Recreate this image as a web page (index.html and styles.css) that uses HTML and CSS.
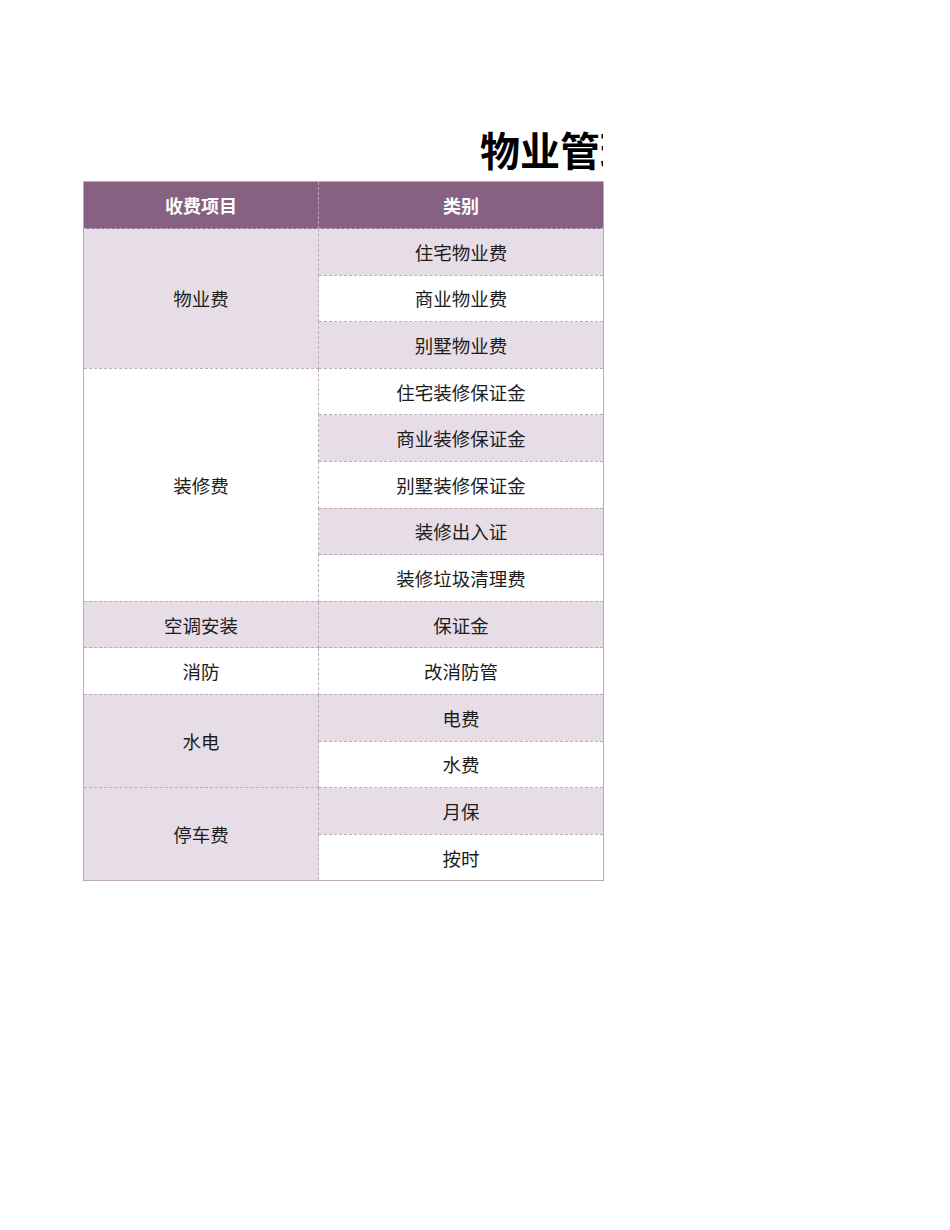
FILE: index.html
```html
<!DOCTYPE html>
<html lang="zh-CN">
<head>
<meta charset="utf-8">
<title>物业管理收费标准</title>
<link rel="stylesheet" href="styles.css">
</head>
<body>
<div class="sheet">
  <div class="title-clip"><h1 class="title">物业管理收费标准</h1></div>
  <table class="fee-table">
    <colgroup><col class="c1"><col class="c2"></colgroup>
    <thead>
      <tr><th>收费项目</th><th>类别</th></tr>
    </thead>
    <tbody>
      <tr><td rowspan="3" class="tint">物业费</td><td class="tint">住宅物业费</td></tr>
      <tr><td>商业物业费</td></tr>
      <tr><td class="tint">别墅物业费</td></tr>
      <tr><td rowspan="5">装修费</td><td>住宅装修保证金</td></tr>
      <tr><td class="tint">商业装修保证金</td></tr>
      <tr><td>别墅装修保证金</td></tr>
      <tr><td class="tint">装修出入证</td></tr>
      <tr><td>装修垃圾清理费</td></tr>
      <tr><td class="tint">空调安装</td><td class="tint">保证金</td></tr>
      <tr><td>消防</td><td>改消防管</td></tr>
      <tr><td rowspan="2" class="tint">水电</td><td class="tint">电费</td></tr>
      <tr><td>水费</td></tr>
      <tr><td rowspan="2" class="tint">停车费</td><td class="tint">月保</td></tr>
      <tr><td>按时</td></tr>
    </tbody>
  </table>
</div>
</body>
</html>
```

FILE: styles.css
```css
html, body {
  margin: 0;
  padding: 0;
  background: #ffffff;
}

body {
  font-family: "Noto Sans CJK SC", "Noto Sans", sans-serif;
  color: #1c1c1c;
}

.sheet {
  padding: 0 0 0 83px;
}

.title-clip {
  width: 520px;
  overflow: hidden;
  padding-top: 127px;
  height: 54px;
  box-sizing: content-box;
}

.title {
  margin: 0;
  padding-left: 397px;
  font-size: 40px;
  line-height: 44px;
  font-weight: 700;
  white-space: nowrap;
  color: #000000;
}

.fee-table {
  border-collapse: collapse;
  table-layout: fixed;
  width: 520px;
  border: 1px solid #bfa7be;
}

.c1 { width: 235px; }
.c2 { width: 285px; }

.fee-table th {
  background: #866182;
  color: #ffffff;
  font-size: 18px;
  font-weight: 700;
  height: 46px;
  padding: 0;
  text-align: center;
  border: 1px dashed #bfa7be;
  border-top: 1px solid #bfa7be;
}

.fee-table td {
  font-size: 18.5px;
  height: 45.6px;
  padding: 0;
  text-align: center;
  vertical-align: middle;
  background: #ffffff;
  border: 1px dashed #c0a8bf;
}

.fee-table td.tint {
  background: #e7dde7;
}
```
